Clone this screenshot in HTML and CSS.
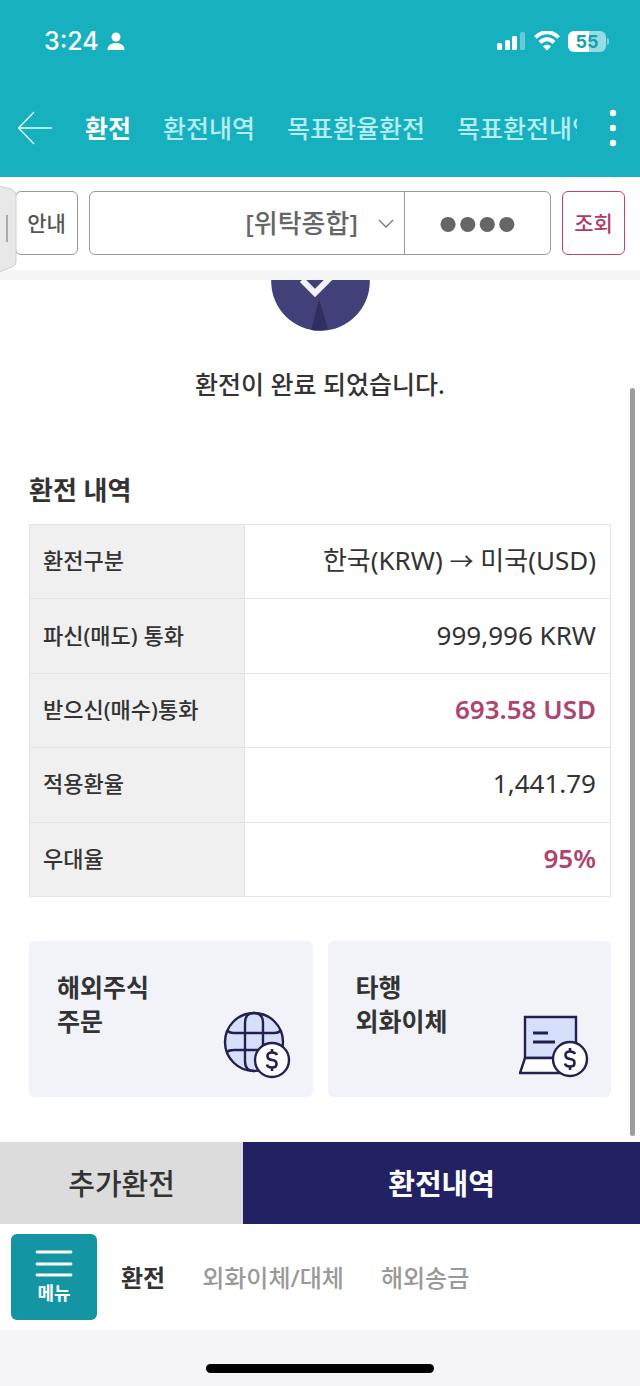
FILE: index.html
```html
<!DOCTYPE html>
<html lang="ko">
<head>
  <meta charset="UTF-8">
  <meta name="viewport" content="width=device-width, initial-scale=1.0">
  <title>환전</title>
  <link rel="stylesheet" href="styles.css">
</head>
<body>
  <header class="header">
    <div class="status-bar">
      <span class="time">3:24</span>
      <svg class="person" width="18" height="20" viewBox="0 0 18 20" fill="#fff">
        <circle cx="9" cy="6" r="4.500"/>
        <path d="M0.500 19c0-5 4-7 8.500-7s8.500 2 8.500 7z"/>
      </svg>
      <div class="status-icons">
        <svg width="29" height="20" viewBox="0 0 29 20" fill="#fff">
          <rect x="0" y="12" width="5" height="7" rx="1.5"/>
          <rect x="8" y="9" width="5" height="10" rx="1.5"/>
          <rect x="15" y="5" width="5" height="14" rx="1.5"/>
          <rect x="23" y="1" width="5" height="18" rx="1.5" opacity="0.35"/>
        </svg>
        <svg width="26" height="20" viewBox="0 0 26 20" fill="none" stroke="#fff" stroke-width="4">
          <path d="M1.5 6.5C8-0.5 18-0.5 24.500 6.500"/>
          <path d="M6 11.500c4-4.200 10-4.200 14 0"/>
          <path d="M13 19.500l-4-4.200c2.400-2 5.600-2 8 0z" fill="#fff" stroke="none"/>
        </svg>
        <div class="battery"><span>55</span></div>
      </div>
    </div>

    <nav class="top-nav">
      <a href="#" class="back" aria-label="뒤로">
        <svg width="36" height="34" viewBox="0 0 36 34" fill="none" stroke="#e8fbfd" stroke-width="1.300">
          <path d="M35 17H2M17 1L1.500 17 17 33"/>
        </svg>
      </a>
      <div class="tabs">
        <a href="#" class="active">환전</a>
        <a href="#">환전내역</a>
        <a href="#">목표환율환전</a>
        <a href="#">목표환전내역</a>
      </div>
      <button class="more" aria-label="더보기">
        <svg width="8" height="38" viewBox="0 0 8 38" fill="#fff">
          <circle cx="4" cy="4" r="3.200"/>
          <circle cx="4" cy="19" r="3.200"/>
          <circle cx="4" cy="34" r="3.200"/>
        </svg>
      </button>
    </nav>
  </header>

  <!-- Account search -->
  <form class="account-bar">
    <svg class="side-handle" width="17" height="88" viewBox="0 0 17 88">
      <path d="M-1 1l12 3q5 2 5 6v67q0 4-4 5L-1 87z" fill="#e8e8e8" stroke="#cfcfcf"/>
      <path d="M7 30v27" stroke="#aaa" stroke-width="2"/>
    </svg>
    <button type="button" class="box-button">안내</button>
    <div class="account-group">
      <select class="account" aria-label="계좌">
        <option>[위탁종합]</option>
      </select>
      <svg class="chevron" width="16" height="10" viewBox="0 0 16 10" fill="none" stroke="#777" stroke-width="1.300">
        <path d="M1 1l7 7 7-7"/>
      </svg>
      <input class="password" type="password" value="0000" aria-label="비밀번호">
    </div>
    <button type="button" class="box-button search">조회</button>
  </form>

  <main class="content">
    <div class="complete-icon">
      <svg width="100" height="51" viewBox="0 0 100 51">
        <circle cx="50.500" cy="1.500" r="49.300" fill="#424079"/>
        <path d="M49 19l-8 31q9 1.500 17-1z" fill="#302e60"/>
        <path d="M32 0l13 13L61-3" fill="none" stroke="#f2f2f8" stroke-width="6"/>
      </svg>
    </div>
    <p class="message">환전이 완료 되었습니다.</p>

    <h2>환전 내역</h2>
    <table class="detail">
      <tr>
        <th scope="row">환전구분</th>
        <td>한국(KRW) <span class="arrow">→</span> 미국(USD)</td>
      </tr>
      <tr>
        <th scope="row">파신(매도) 통화</th>
        <td>999,996 KRW</td>
      </tr>
      <tr>
        <th scope="row">받으신(매수)통화</th>
        <td class="point">693.58 USD</td>
      </tr>
      <tr>
        <th scope="row">적용환율</th>
        <td>1,441.79</td>
      </tr>
      <tr>
        <th scope="row">우대율</th>
        <td class="point">95%</td>
      </tr>
    </table>

    <div class="cards">
      <a href="#" class="card">
        <span>해외주식<br>주문</span>
        <svg width="68" height="68" viewBox="0 0 68 68" fill="none" stroke="#23204f" stroke-width="2.400">
          <circle cx="31" cy="31" r="29" fill="#d7e0fb"/>
          <path d="M22 50V12q0-10 9-10t9 10v26M22 50q0 10 9 10M4 19q2 3 7 3h40q5 0 7-3M4 41q2-2 7-2h27"/>
          <circle cx="49" cy="49" r="17" fill="#fff"/>
          <path d="M54 44q-1-2.500-5-2.500c-6 0-6 7 0 7.500s6 7.500 0 7.500q-4.500 0-5-3M49 38v4M49 56v4" stroke-width="2.600"/>
        </svg>
      </a>
      <a href="#" class="card">
        <span>타행<br>외화이체</span>
        <svg width="70" height="68" viewBox="0 0 70 68" fill="none" stroke="#23204f" stroke-width="2.400">
          <path d="M6 6h51v41H6z" fill="#d7e0fb"/>
          <path d="M6 47h51v15H1z" fill="#fff"/>
          <path d="M14 22h15M14 31h22" stroke-width="2.800"/>
          <circle cx="51" cy="48" r="17" fill="#fff"/>
          <path d="M56 43q-1-2.500-5-2.500c-6 0-6 7 0 7.500s6 7.500 0 7.500q-4.500 0-5-3M51 37v4M51 55v4" stroke-width="2.600"/>
        </svg>
      </a>
    </div>
    <div class="scrollbar"></div>
  </main>

  <div class="actions">
    <button class="more-exchange">추가환전</button>
    <button class="history">환전내역</button>
  </div>

  <footer class="bottom-nav">
    <button class="menu">
      <svg width="38" height="28" viewBox="0 0 38 28" stroke="#fff" stroke-width="2.800" stroke-linecap="round">
        <path d="M2 3h34M2 15h34M2 26h34"/>
      </svg>
      메뉴
    </button>
    <a href="#" class="active">환전</a>
    <a href="#">외화이체/대체</a>
    <a href="#">해외송금</a>
  </footer>
  <div class="home-area"><div class="home-indicator"></div></div>
</body>
</html>
```

FILE: styles.css
```css
* {
  box-sizing: border-box;
}

body {
  margin: 0;
  min-height: 100vh;
  display: flex;
  flex-direction: column;
  background-color: #fff;
  color: #333;
  font-family: "Noto Sans", "Noto Sans CJK KR", sans-serif;
  font-size: 26px;
  font-weight: 500;
}

a {
  color: inherit;
  text-decoration: none;
}

button,
select,
input {
  font-family: inherit;
  font-weight: inherit;
  color: inherit;
  margin: 0;
  padding: 0;
  border: none;
  background: none;
}

svg {
  display: block;
  flex-shrink: 0;
}

/* Header */
.header {
  background-color: #16b0bf;
  color: #fff;
}

.status-bar {
  display: flex;
  align-items: center;
  height: 78px;
  padding: 4px 34px 0 44px;
}

.time {
  font-family: Inter, sans-serif;
  font-size: 25px;
  font-weight: 500;
}

.person {
  margin-left: 8px;
}

.status-icons {
  display: flex;
  align-items: center;
  gap: 8px;
  margin-left: auto;
}

.battery {
  position: relative;
  width: 38px;
  height: 21px;
  border-radius: 6px;
  background: linear-gradient(90deg, #fff 55%, #94dbe2 55%);
  color: #16a0ae;
  font-family: Inter, sans-serif;
  font-size: 18px;
  font-weight: 700;
  line-height: 21px;
  text-align: center;
}

.battery::after {
  content: "";
  position: absolute;
  left: 39px;
  top: 7px;
  width: 2px;
  height: 7px;
  border-radius: 0 2px 2px 0;
  background-color: #7fd3dc;
}

.top-nav {
  display: flex;
  align-items: center;
  height: 99px;
  padding: 0 23px 0 17px;
}

.tabs {
  flex: 1;
  min-width: 0;
  display: flex;
  gap: 32px;
  margin: 0 32px;
  padding-bottom: 2px;
  overflow: hidden;
  white-space: nowrap;
  font-size: 25px;
  color: #b5edf3;
}

.tabs .active {
  color: #fff;
  font-weight: 700;
}

/* Account search */
.account-bar {
  position: relative;
  display: flex;
  gap: 11px;
  padding: 14px 15px 15px;
  border-bottom: 10px solid #f5f5f5;
}

.side-handle {
  position: absolute;
  left: 0;
  top: 8px;
}

.box-button {
  width: 63px;
  height: 64px;
  border: 1px solid #999;
  border-radius: 6px;
  padding-bottom: 2px;
  color: #555;
  font-size: 21px;
}

.search {
  border-color: #b8447a;
  color: #b03a6e;
}

.account-group {
  position: relative;
  flex: 1;
  display: flex;
  height: 64px;
  border: 1px solid #999;
  border-radius: 6px;
  color: #666;
}

.account {
  flex: 1;
  min-width: 0;
  appearance: none;
  padding-right: 46px;
  border-right: 1px solid #999;
  border-radius: 0;
  font-size: 26px;
  text-align: right;
  text-align-last: right;
}

.chevron {
  position: absolute;
  right: 156px;
  top: 27px;
}

.password {
  width: 145px;
  font-family: "Liberation Sans", sans-serif;
  font-size: 56px;
  font-weight: 400;
  text-align: center;
}

/* Result */
.content {
  position: relative;
  flex: 1;
  padding: 0 29px 45px;
}

.complete-icon {
  display: flex;
  justify-content: center;
}

.message {
  margin: 35px 0 70px;
  line-height: 36px;
  font-size: 25px;
  text-align: center;
}

h2 {
  margin: 0 0 16px;
  font-size: 26px;
  font-weight: 700;
  line-height: 36px;
}

.detail {
  width: 100%;
  height: 373px;
  border-collapse: collapse;
  table-layout: fixed;
}

.detail th,
.detail td {
  border: 1px solid #e4e4e4;
  padding: 0 14px 3px;
  line-height: 36px;
  vertical-align: middle;
}

.detail th {
  width: 37%;
  padding-left: 13px;
  background-color: #f0f0f0;
  font-size: 22px;
  font-weight: 500;
  text-align: left;
}

.detail td {
  font-weight: 400;
  text-align: right;
}

.detail .arrow {
  font-family: "Noto Sans CJK KR", sans-serif;
  font-size: 24px;
  line-height: 24px;
}

.detail .point {
  color: #ae4470;
  font-weight: 600;
}

.cards {
  display: grid;
  grid-template-columns: 1fr 1fr;
  gap: 15px;
  margin-top: 44px;
}

.card {
  display: flex;
  justify-content: space-between;
  height: 156px;
  padding: 29px 22px 18px 28px;
  border-radius: 6px;
  background-color: #f1f3f8;
  font-size: 25px;
  font-weight: 600;
  line-height: 34px;
}

.card svg {
  align-self: flex-end;
}

.scrollbar {
  position: absolute;
  right: 5px;
  top: 108px;
  bottom: 6px;
  width: 5px;
  border-radius: 3px;
  background-color: #9d9d9d;
}

/* Bottom buttons */
.actions {
  display: flex;
  height: 82px;
}

.actions button {
  padding-bottom: 2px;
  font-size: 29px;
}

.more-exchange {
  width: 38%;
  background-color: #dcdcdc;
}

.actions .history {
  flex: 1;
  background-color: #222163;
  color: #fff;
  font-weight: 700;
}

.bottom-nav {
  display: flex;
  align-items: center;
  height: 106px;
  padding: 0 11px;
  color: #999;
  font-size: 24px;
}

.bottom-nav a {
  margin-right: 37px;
  padding-bottom: 2px;
}

.bottom-nav .active {
  color: #333;
  font-weight: 700;
}

.menu {
  display: flex;
  flex-direction: column;
  align-items: center;
  justify-content: center;
  gap: 4px;
  width: 86px;
  height: 86px;
  margin-right: 24px;
  border-radius: 6px;
  background-color: #1395a3;
  font-size: 18px;
  line-height: 24px;
}

.bottom-nav .menu {
  color: #fff;
  font-weight: 700;
}

.home-area {
  height: 56px;
  padding-top: 34px;
  background-color: #f5f5f8;
}

.home-indicator {
  width: 228px;
  height: 9px;
  margin: 0 auto;
  border-radius: 5px;
  background-color: #000;
}
```
